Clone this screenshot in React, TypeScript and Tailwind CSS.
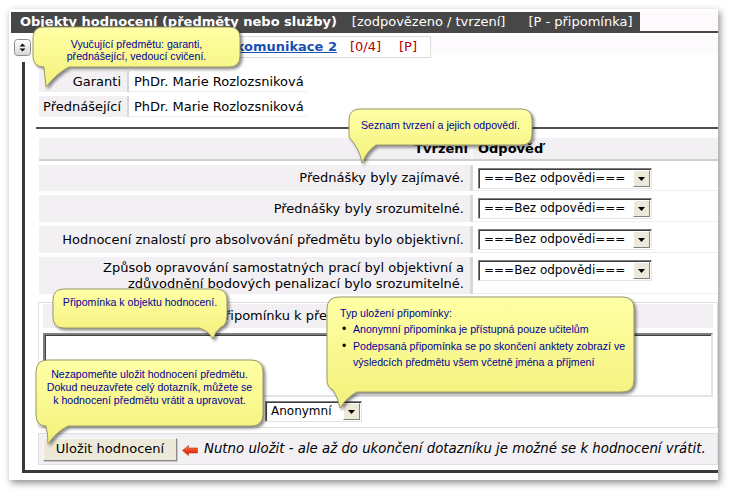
import React from "react";

const Tri = () => (
  <svg width="7" height="4" viewBox="0 0 7 4">
    <path d="M0 0H7L3.5 4Z" fill="#000" />
  </svg>
);

function Select({ text, className }: { text: string; className: string }) {
  return (
    <div
      className={
        "flex h-[21px] border border-t-[#7f7f7f] border-l-[#7f7f7f] border-r-[#e4e4e4] border-b-[#e4e4e4] bg-white text-[12px] shadow-[inset_1px_1px_0_#404040] " +
        className
      }
    >
      <span className="flex-1 pl-[5px] leading-[19px] whitespace-nowrap overflow-hidden">{text}</span>
      <span className="mt-[1px] mr-[1px] flex h-[17px] w-[17px] items-center justify-center border border-t-[#fff] border-l-[#fff] border-r-[#808080] border-b-[#808080] bg-[#ece9d8]">
        <Tri />
      </span>
    </div>
  );
}

function Callout({
  left,
  top,
  w,
  h,
  path,
  id,
  children,
  textClass,
}: {
  left: string;
  top: string;
  w: string;
  h: string;
  path: string;
  id: string;
  children: React.ReactNode;
  textClass: string;
}) {
  return (
    <div className={"absolute " + left + " " + top + " " + w + " " + h}>
      <svg
        className="absolute left-0 top-0 overflow-visible drop-shadow-[2px_2px_1.5px_rgba(0,0,0,0.45)]"
        width="10"
        height="10"
      >
        <defs>
          <linearGradient id={id} x1="0" y1="0" x2="0" y2="1">
            <stop offset="0" stopColor="#ffffa6" />
            <stop offset="1" stopColor="#f3f17a" />
          </linearGradient>
        </defs>
        <path d={path} fill={`url(#${id})`} stroke="#9a9a6a" strokeWidth="1" />
      </svg>
      <div
        className={
          "relative font-['Liberation_Sans',Arial,sans-serif] text-[10.6px] text-[#000099] " + textClass
        }
      >
        {children}
      </div>
    </div>
  );
}

const ExpandIcon = () => (
  <svg width="17" height="17" viewBox="0 0 17 17">
    <defs>
      <linearGradient id="eg" x1="0" y1="0" x2="0" y2="1">
        <stop offset="0" stopColor="#ffffff" />
        <stop offset="1" stopColor="#d6d6d6" />
      </linearGradient>
    </defs>
    <rect x="0.5" y="0.5" width="16" height="16" rx="3" fill="url(#eg)" stroke="#8c8c8c" />
    <path d="M5.5 7.5H11.5L8.5 4.5Z" fill="#111" />
    <path d="M5.5 9.5H11.5L8.5 12.5Z" fill="#111" />
  </svg>
);

const RedArrow = () => (
  <svg width="16" height="11" viewBox="0 0 16 11">
    <defs>
      <linearGradient id="ra" x1="0" y1="0" x2="0" y2="1">
        <stop offset="0" stopColor="#ff8a60" />
        <stop offset="0.5" stopColor="#e8401a" />
        <stop offset="1" stopColor="#b82a0c" />
      </linearGradient>
    </defs>
    <path d="M0.5 5.5L6.5 0.5V3H15.5V8H6.5V10.5Z" fill="url(#ra)" stroke="#c03a18" strokeWidth="0.6" />
  </svg>
);

const rows: { text: React.ReactNode; h: string }[] = [
  { text: "Přednášky byly zajímavé.", h: "h-[26px]" },
  { text: "Přednášky byly srozumitelné.", h: "h-[27px]" },
  { text: "Hodnocení znalostí pro absolvování předmětu bylo objektivní.", h: "h-[27px]" },
  {
    text: (
      <>
        Způsob opravování samostatných prací byl objektivní a
        <br />
        zdůvodnění bodových penalizací bylo srozumitelné.
      </>
    ),
    h: "h-[37px]",
  },
];

export default function App() {
  return (
    <div className="relative h-[494px] w-[732px] overflow-hidden bg-white pl-[9px] pt-[9px] font-['DejaVu_Sans',Verdana,sans-serif] text-[13px] text-black">
      <div className="flex h-[471px] w-[709px] flex-col bg-white pb-[7px] pl-[2px] pt-[3px] shadow-[2px_3px_7px_rgba(0,0,0,0.45)]">
        {/* header */}
        <div className="flex h-[19px]">
          <div className="flex w-[629px] items-center overflow-hidden whitespace-nowrap bg-[#474747] pl-[9px] text-white">
            <span className="text-[13px] font-bold">Objekty hodnocení (předměty nebo služby)</span>
            <span className="ml-[15px]">[zodpovězeno / tvrzení]</span>
            <span className="ml-[23px]">[P - připomínka]</span>
          </div>
          <div className="flex-1 bg-[#fdf9fd]" />
        </div>
        <div className="h-[2px] bg-[#474747]" />

        {/* subject row */}
        <div className="mt-[3px] flex h-[22px]">
          <div className="flex w-[22px] items-center pl-[3px]">
            <ExpandIcon />
          </div>
          <div className="flex w-[398px] items-center justify-end whitespace-nowrap border border-[#dcdcdc] bg-white pr-[13px]">
            <a className="font-bold text-[#1a4fb0] underline">Obchodní komunikace 2</a>
            <span className="ml-[13px] text-[#b00000]">[0/4]</span>
            <span className="ml-[18px] text-[#b00000]">[P]</span>
          </div>
          <div className="h-[17px] flex-1 bg-[#fdfafd]" />
        </div>

        {/* body */}
        <div className="ml-[11px] mt-[4px] flex flex-1 flex-col border-b-[3px] border-l-[3px] border-[#3a3a3a] pl-[13px]">
          {/* teachers */}
          <div className="ml-[1px] mt-[9px] flex flex-col gap-[4px]">
            {[
              ["Garanti", "PhDr. Marie Rozlozsniková"],
              ["Přednášející", "PhDr. Marie Rozlozsniková"],
            ].map(([l, v]) => (
              <div key={l} className="flex h-[21px]">
                <div className="w-[88px] bg-[#f3f0f3] pr-[6px] text-right leading-[21px] whitespace-nowrap">{l}</div>
                <div className="w-[2px] bg-[#d6d6d6]" />
                <div className="w-[178px] border-b border-[#ededed] pl-[5px] leading-[21px] whitespace-nowrap">{v}</div>
              </div>
            ))}
          </div>

          <div className="-ml-[2px] mt-[10px] h-[2px] bg-[#505050]" />

          {/* statements table */}
          <div className="ml-[1px] mt-[9px] flex h-[23px] border-b-2 border-[#cfcfcf] bg-[#f3f0f4]">
            <div className="w-[431px] pr-[2px] text-right font-bold leading-[21px]">Tvrzení</div>
            <div className="w-[3px] bg-[#f9f9f9]" />
            <div className="pl-[5px] font-bold leading-[21px]">Odpověď</div>
          </div>
          {rows.map((r, i) => (
            <div key={i} className={"ml-[1px] mt-[4px] flex " + r.h}>
              <div className="flex w-[431px] items-center justify-end bg-[#f3f0f4] pr-[6px] text-right leading-[16px]">
                <span className="whitespace-nowrap">{r.text}</span>
              </div>
              <div className="w-[3px] bg-[#d8d8d8]" />
              <div className="flex-1 border-b border-[#eeeeee] pl-[5px] pt-[3px]">
                <Select text="===Bez odpovědi===" className="w-[174px]" />
              </div>
            </div>
          ))}

          {/* remark section */}
          <div className="mt-[8px] flex h-[126px] flex-col border border-[#dedede] px-[4px] pt-[1px]">
            <div className="h-[24px] bg-[#f3f0f4] pl-[43px] leading-[24px] whitespace-nowrap">
              Zde můžete napsat připomínku k předmětu
            </div>
            <div className="mt-[5px] h-[64px] border-2 border-t-[#7f7f7f] border-l-[#7f7f7f] border-r-[#e4e4e4] border-b-[#e4e4e4] bg-white shadow-[inset_1px_1px_0_#404040]" />
            <div className="mt-[4px] flex items-center">
              <span className="w-[222px]" />
              <Select text="Anonymní" className="w-[97px]" />
            </div>
          </div>

          {/* save row */}
          <div className="mt-[5px] flex h-[32px] items-center border border-[#dedede] bg-[#f3f0f4] pl-[4px]">
            <button className="h-[23px] w-[134px] border border-b-[#8a8a8a] border-l-[#fafafa] border-r-[#8a8a8a] border-t-[#fafafa] bg-[#ece9d8] text-[13px] text-black shadow-[1px_1px_0_#c8c8c8]">
              Uložit hodnocení
            </button>
            <span className="ml-[5px] mt-[3px] flex">
              <RedArrow />
            </span>
            <span className="ml-[6px] whitespace-nowrap text-[13.3px] italic">
              Nutno uložit - ale až do ukončení dotazníku je možné se k hodnocení vrátit.
            </span>
          </div>
        </div>
      </div>

      {/* callouts */}
      <Callout
        id="c1"
        left="left-[33px]"
        top="top-[27px]"
        w="w-[207px]"
        h="h-[40px]"
        path="M11,0 H196 Q207,0 207,11 V29 Q207,40 196,40 H36 Q24,46 13,60 Q12,50 11,40 Q0,40 0,29 V11 Q0,0 11,0 Z"
        textClass="pt-[11px] text-center leading-[12px]"
      >
        Vyučující předmětu: garanti,
        <br />
        přednášející, vedoucí cvičení.
      </Callout>
      <Callout
        id="c2"
        left="left-[349px]"
        top="top-[109px]"
        w="w-[183px]"
        h="h-[36px]"
        path="M11,0 H172 Q183,0 183,11 V25 Q183,36 172,36 H27 Q18,42 13,54 Q11,40 0,28 V11 Q0,0 11,0 Z"
        textClass="pt-[10px] text-center leading-[13px]"
      >
        Seznam tvrzení a jejich odpovědí.
      </Callout>
      <Callout
        id="c3"
        left="left-[53px]"
        top="top-[289px]"
        w="w-[174px]"
        h="h-[39px]"
        path="M11,0 H163 Q174,0 174,11 V26 Q174,36 168,38 Q162,42 160,50 Q155,41 146,39 H11 Q0,39 0,28 V11 Q0,0 11,0 Z"
        textClass="pt-[7px] text-center leading-[13px]"
      >
        Připomínka k objektu hodnocení.
      </Callout>
      <Callout
        id="c4"
        left="left-[327px]"
        top="top-[297px]"
        w="w-[307px]"
        h="h-[95px]"
        path="M12,0 H295 Q307,0 307,12 V83 Q307,95 295,95 H30 Q20,100 13,111 Q11,100 6,93 Q0,90 0,83 V12 Q0,0 12,0 Z"
        textClass="pl-[13px] pt-[9px]"
      >
        <div className="leading-[14px]">Typ uložení připomínky:</div>
        <ul className="ml-[2px] mt-[1px] leading-[16.5px]">
          <li className="flex">
            <span className="w-[11px] text-[12px] text-black">•</span>
            <span>Anonymní připomínka je přístupná pouze učitelům</span>
          </li>
          <li className="flex">
            <span className="w-[11px] text-[12px] text-black">•</span>
            <span className="whitespace-nowrap">
              Podepsaná připomínka se po skončení anktety zobrazí ve
              <br />
              výsledcích předmětu všem včetně jména a příjmení
            </span>
          </li>
        </ul>
      </Callout>
      <Callout
        id="c5"
        left="left-[36px]"
        top="top-[360px]"
        w="w-[227px]"
        h="h-[66px]"
        path="M12,0 H215 Q227,0 227,12 V54 Q227,66 215,66 H32 Q20,72 12,84 Q12,74 10,66 Q0,66 0,54 V12 Q0,0 12,0 Z"
        textClass="pt-[8px] text-center leading-[13px]"
      >
        Nezapomeňte uložit hodnocení předmětu.
        <br />
        Dokud neuzavřete celý dotazník, můžete se
        <br />k hodnocení předmětu vrátit a upravovat.
      </Callout>
    </div>
  );
}
